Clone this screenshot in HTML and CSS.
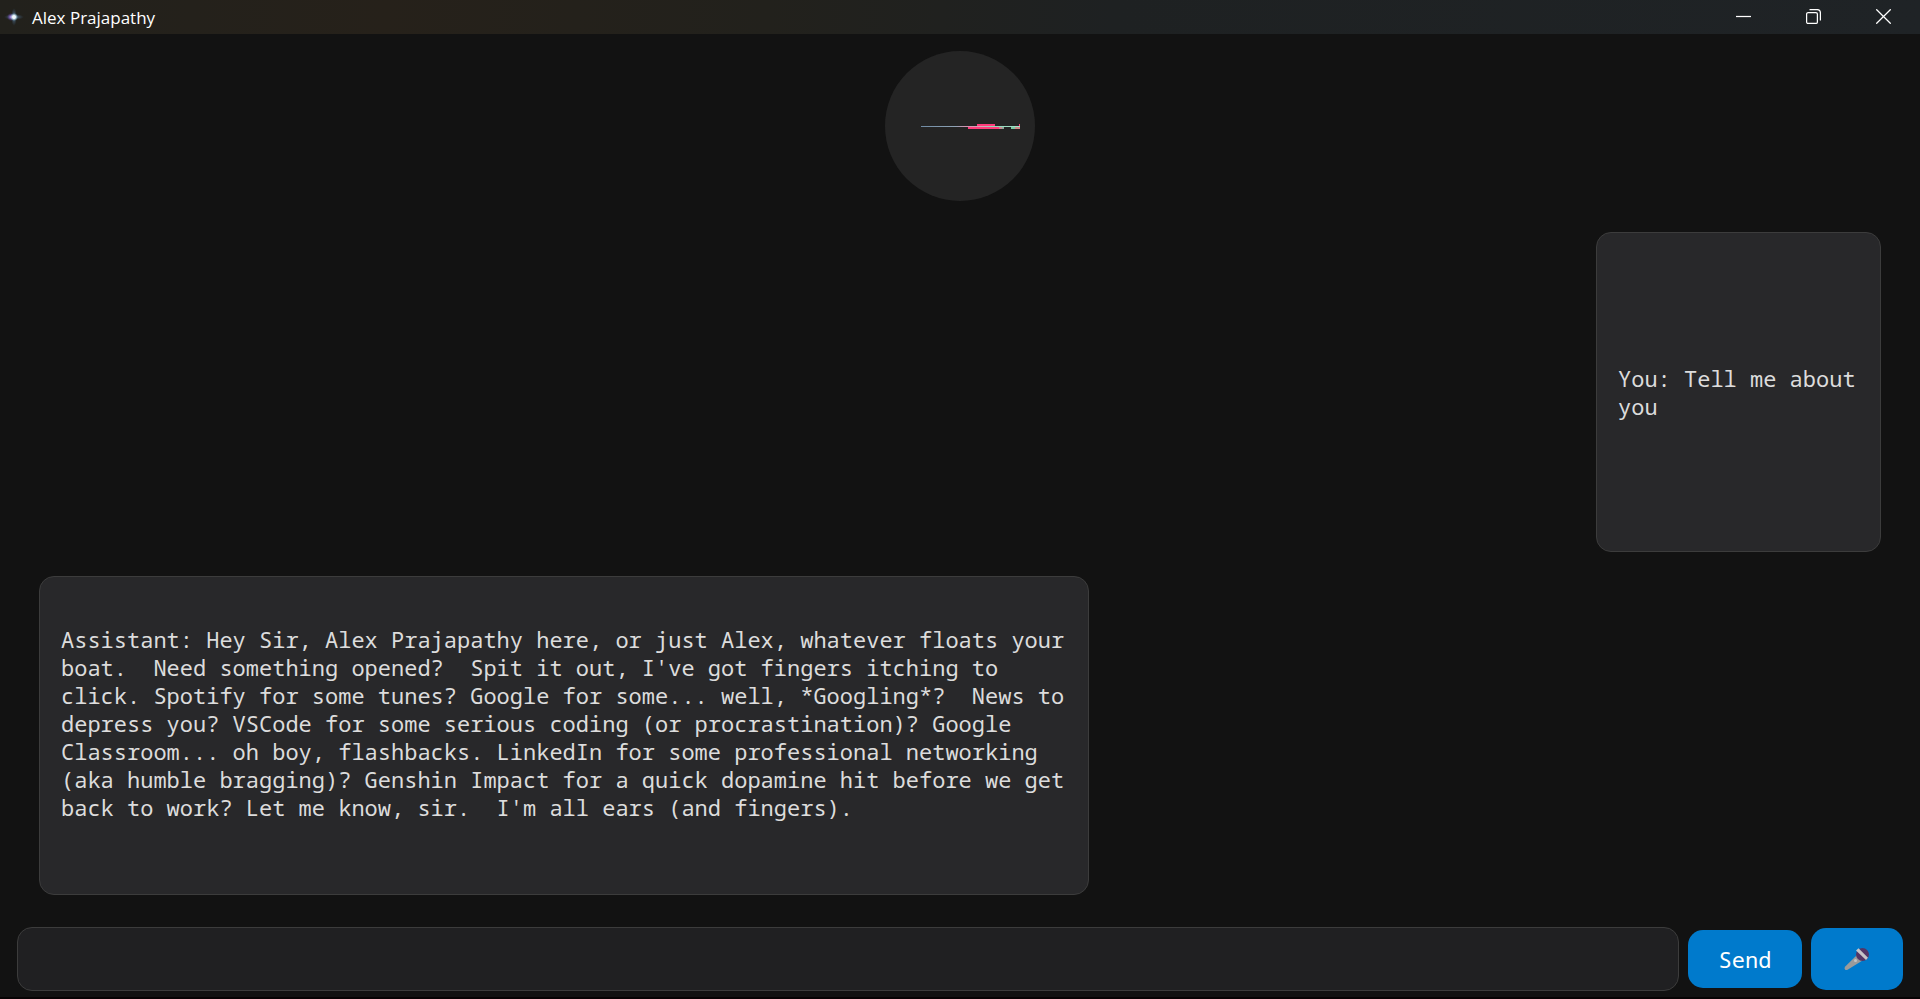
FILE: index.html
```html
<!DOCTYPE html>
<html lang="en">
<head>
<meta charset="utf-8">
<title>Alex Prajapathy</title>
<link rel="stylesheet" href="styles.css">
</head>
<body>
<div class="window">
  <header class="titlebar">
    <svg class="app-icon" width="20" height="20" viewBox="0 0 20 20" aria-hidden="true">
      <defs>
        <radialGradient id="halo">
          <stop offset="0" stop-color="#6c8fb8" stop-opacity="0.9"/>
          <stop offset="1" stop-color="#35506a" stop-opacity="0"/>
        </radialGradient>
        <radialGradient id="violet">
          <stop offset="0" stop-color="#c084f0"/>
          <stop offset="1" stop-color="#5a3ab0" stop-opacity="0"/>
        </radialGradient>
        <radialGradient id="core">
          <stop offset="0" stop-color="#ffffff"/>
          <stop offset="0.4" stop-color="#e4f0f6"/>
          <stop offset="1" stop-color="#7fc4d0" stop-opacity="0"/>
        </radialGradient>
      </defs>
      <ellipse cx="10" cy="10" rx="10" ry="3" fill="url(#halo)"/>
      <ellipse cx="10" cy="10" rx="3" ry="9" fill="url(#halo)"/>
      <circle cx="7" cy="10" r="4" fill="url(#violet)"/>
      <circle cx="10" cy="10" r="4" fill="url(#core)"/>
    </svg>
    <h1 class="title">Alex Prajapathy</h1>
    <div class="window-controls">
      <button class="window-button" type="button" aria-label="Minimize">
        <svg width="15" height="15" viewBox="0 0 15 15"><path d="M0 7.5H15" /></svg>
      </button>
      <button class="window-button" type="button" aria-label="Restore">
        <svg width="15" height="15" viewBox="0 0 15 15"><rect x=".6" y="3.6" width="10.800" height="10.800" rx="1.5"/><path d="M3.500 .6H11Q14.4 .6 14.4 4V11.500"/></svg>
      </button>
      <button class="window-button" type="button" aria-label="Close">
        <svg width="15" height="15" viewBox="0 0 15 15"><path d="M.3 .3L14.7 14.7M14.7 .3L.3 14.7"/></svg>
      </button>
    </div>
  </header>

  <main class="content">
    <div class="avatar">
      <svg width="150" height="150" viewBox="0 0 150 150" shape-rendering="crispEdges" aria-hidden="true">
        <defs>
          <linearGradient id="beam" gradientUnits="userSpaceOnUse" x1="36" y1="0" x2="135" y2="0">
            <stop offset="0" stop-color="#6f8aa3"/>
            <stop offset="0.35" stop-color="#8fa3b5"/>
            <stop offset="0.45" stop-color="#d391b0"/>
            <stop offset="0.6" stop-color="#dca0b5"/>
            <stop offset="0.72" stop-color="#8fd8b8"/>
            <stop offset="1" stop-color="#a8e0cb"/>
          </linearGradient>
        </defs>
        <rect x="92" y="73" width="18" height="2" fill="#ff3d7c"/>
        <rect x="134" y="73" width="1" height="2" fill="#ff3d7c"/>
        <rect x="36" y="75" width="99" height="1" fill="url(#beam)"/>
        <rect x="83" y="76" width="31" height="2" fill="#ff3d7c"/>
        <rect x="114" y="76" width="3" height="2" fill="#c98a90"/>
        <rect x="117" y="76" width="2" height="2" fill="#8fa99b"/>
        <rect x="126" y="76" width="4" height="2" fill="#7cc9a4"/>
        <rect x="130" y="76" width="5" height="2" fill="#cf8a8a"/>
      </svg>
    </div>

    <section class="chat" aria-label="Conversation">
      <article class="bubble bubble-user">
        <p class="message">You: Tell me about you</p>
      </article>
      <article class="bubble bubble-assistant">
        <p class="message">Assistant: Hey Sir, Alex Prajapathy here, or just Alex, whatever floats your boat.  Need something opened?  Spit it out, I've got fingers itching to click. Spotify for some tunes? Google for some... well, *Googling*?  News to depress you? VSCode for some serious coding (or procrastination)? Google Classroom... oh boy, flashbacks. LinkedIn for some professional networking (aka humble bragging)? Genshin Impact for a quick dopamine hit before we get back to work? Let me know, sir.  I'm all ears (and fingers).</p>
      </article>
    </section>

    <form class="composer">
      <input class="composer-input" type="text" aria-label="Message">
      <button class="button button-send" type="button">Send</button>
      <button class="button button-mic" type="button" aria-label="Speak">
        <svg width="26" height="24" viewBox="0 0 26 24">
          <path d="M13 8L18.500 13.500L4 22.500Q2 23.500 1 22.500Q0 21.500 1 19.800Z" fill="#9b9b9b"/>
          <circle cx="11.500" cy="13.500" r="1.500" fill="#c4c4c4"/>
          <circle cx="18.500" cy="7.500" r="6.500" fill="#533566"/>
          <path d="M12 3.500L14.500 1.200L24 10.700L22 13Z" fill="#c6c4c8"/>
        </svg>
      </button>
    </form>
  </main>
</div>
</body>
</html>
```
FILE: styles.css
```css
* {
  box-sizing: border-box;
}

body {
  margin: 0;
  background: #121212;
  color: #dcdcdc;
  font-family: "Noto Sans Mono", "DejaVu Sans Mono", monospace;
}

.window {
  display: flex;
  flex-direction: column;
  min-height: 100vh;
  border-bottom: 2px solid #070304;
}

.titlebar {
  display: flex;
  align-items: flex-start;
  height: 34px;
  padding-right: 2px;
  padding-left: 4px;
  background: linear-gradient(90deg, #22211c 0%, #26211a 20%, #22211c 40%, #1e2122 58%, #1f2326 100%);
}

.app-icon {
  margin: 7px 8px 0 0;
}

.title {
  flex: 1;
  margin: 0;
  color: #ffffff;
  font: 400 17px/35px "Open Sans", sans-serif;
}

.window-controls {
  display: flex;
}

.window-button {
  display: flex;
  align-items: center;
  justify-content: center;
  width: 70px;
  height: 33px;
  padding: 0;
  border: 0;
  background: none;
}

.window-button svg {
  fill: none;
  stroke: #ffffff;
  stroke-width: 1.25;
}

.content {
  display: flex;
  flex: 1;
  flex-direction: column;
  padding: 17px 17px 6px;
}

.avatar {
  display: flex;
  align-self: center;
  width: 150px;
  height: 150px;
  border-radius: 50%;
  background: #242424;
  overflow: hidden;
}

.chat {
  display: grid;
  flex: 1;
  grid-auto-rows: 1fr;
  gap: 24px;
  padding: 31px 22px 32px;
}

.bubble {
  display: flex;
  align-items: center;
  padding: 21px;
  border: 1px solid #3c3c3c;
  border-radius: 15px;
  background: #28282a;
}

.bubble-user {
  justify-self: end;
  max-width: 285px;
}

.bubble-assistant {
  justify-self: start;
  max-width: 1050px;
  padding-bottom: 46px;
}

.message {
  margin: 0;
  font-size: 22px;
  line-height: 28px;
  white-space: pre-wrap;
}

.composer {
  display: flex;
  align-items: center;
  gap: 9px;
}

.composer-input {
  flex: 1;
  min-width: 0;
  height: 64px;
  padding: 0 22px;
  border: 1px solid #3c3c3c;
  border-radius: 15px;
  background: #202022;
  color: #dcdcdc;
  font: inherit;
  font-size: 22px;
}

.button {
  display: flex;
  align-items: center;
  justify-content: center;
  padding: 0;
  border: 0;
  border-radius: 15px;
  background: #007acc;
  color: #ffffff;
  font: inherit;
  font-size: 22px;
}

.button-send {
  width: 114px;
  height: 58px;
}

.button-mic {
  width: 92px;
  height: 62px;
}
```
